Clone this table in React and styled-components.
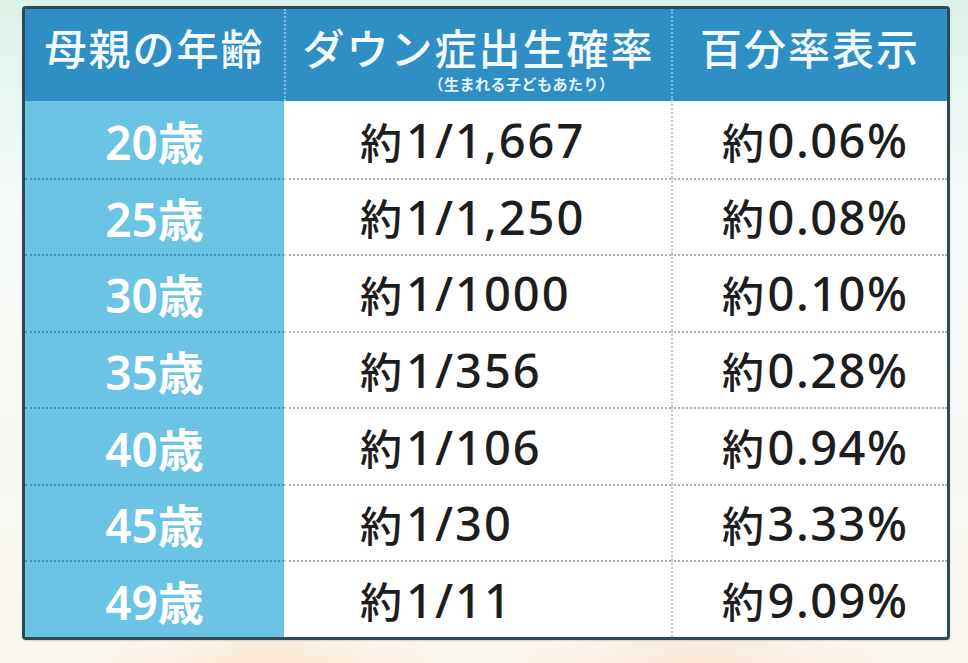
import React from "react";
import styled, { createGlobalStyle } from "styled-components";

const Global = createGlobalStyle`
  html, body { margin: 0; padding: 0; }
  body {
    width: 968px; height: 663px; overflow: hidden;
    font-family: "Noto Sans", "Noto Sans CJK JP", sans-serif;
  }
`;

const Page = styled.div`
  width: 968px;
  height: 663px;
  box-sizing: border-box;
  padding: 6px 18px 0 22px;
  background:
    radial-gradient(ellipse 180px 40px at 270px 663px, #fde7cf 0%, rgba(253,231,207,0) 100%),
    radial-gradient(ellipse 200px 50px at 700px 663px, #fce8d6 0%, rgba(252,232,214,0) 100%),
    linear-gradient(180deg, #d9f1e6 0px, #e6f5ee 60px, #f6fbf8 200px, #fbf7ef 100%);
`;

const Table = styled.div`
  width: 928px;
  height: 634px;
  box-sizing: border-box;
  border: 3px solid #2b4b5b;
  border-radius: 4px;
  overflow: hidden;
  display: grid;
  grid-template-columns: 259px 387px 1fr;
  grid-template-rows: 92px repeat(7, 1fr);
  background: #ffffff;
  box-shadow: 0 1px 2px rgba(0,0,0,0.15);
`;

const HeadCell = styled.div`
  background: #2f8fc5;
  color: #f4fbff;
  display: flex;
  flex-direction: column;
  align-items: center;
  justify-content: flex-start;
  padding-top: 19px;
  font-weight: 500;
  font-size: 42px;
  letter-spacing: 2px;
  line-height: 1;
  border-left: ${p => (p.$first ? "none" : "2px dotted #7fc0e4")};
  box-sizing: border-box;
`;

const Sub = styled.span`
  font-size: 15px;
  font-weight: 700;
  letter-spacing: 0.5px;
  line-height: 1;
  margin-top: 7px;
  margin-left: 86px;
  color: #e3f3fb;
`;

const AgeCell = styled.div`
  background: #6cc4e4;
  color: #ffffff;
  font-weight: 600;
  font-size: 46px;
  display: flex;
  align-items: center;
  justify-content: center;
  letter-spacing: 0;
  border-top: 2px dotted ${p => (p.$first ? "transparent" : "#4d8fb2")};
  box-sizing: border-box;
`;

const ValCell = styled.div`
  color: #1d1d1d;
  font-weight: 500;
  font-size: 47px;
  display: flex;
  align-items: center;
  padding-left: ${p => p.$pad}px;
  border-top: 2px dotted ${p => (p.$first ? "transparent" : "#a9b4ba")};
  border-left: 2px dotted ${p => (p.$divider ? "#c2c9cd" : "transparent")};
  box-sizing: border-box;
  letter-spacing: ${p => p.$ls}px;
`;

const Yaku = styled.span`
  font-size: 42px;
  margin-right: 2px;
`;

const rows = [
  ["20", "1/1,667", "0.06%"],
  ["25", "1/1,250", "0.08%"],
  ["30", "1/1000", "0.10%"],
  ["35", "1/356", "0.28%"],
  ["40", "1/106", "0.94%"],
  ["45", "1/30", "3.33%"],
  ["49", "1/11", "9.09%"],
];

export default function App() {
  return (
    <>
      <Global />
      <Page>
        <Table>
          <HeadCell $first>母親の年齢</HeadCell>
          <HeadCell>
            ダウン症出生確率
            <Sub>（生まれる子どもあたり）</Sub>
          </HeadCell>
          <HeadCell>百分率表示</HeadCell>
          {rows.map(([age, ratio, pct], i) => (
            <React.Fragment key={age}>
              <AgeCell $first={i === 0}>{age}歳</AgeCell>
              <ValCell $first={i === 0} $pad={74} $ls={2}>
                <Yaku>約</Yaku>{ratio}
              </ValCell>
              <ValCell $first={i === 0} $pad={49} $ls={1.5} $divider>
                <Yaku>約</Yaku>{pct}
              </ValCell>
            </React.Fragment>
          ))}
        </Table>
      </Page>
    </>
  );
}
